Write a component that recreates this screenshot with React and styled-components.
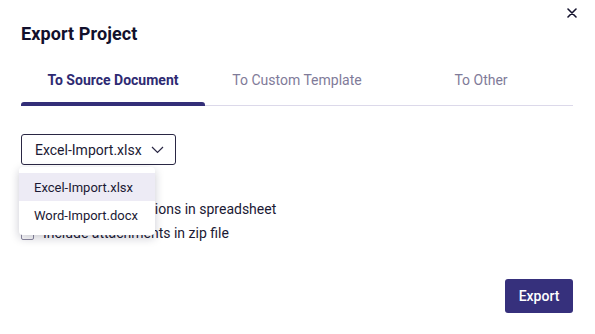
import React, { useState } from 'react';
import styled, { createGlobalStyle } from 'styled-components';

const GlobalStyle = createGlobalStyle`
  body {
    margin: 0;
    background: #ffffff;
    font-family: Roboto, 'Noto Sans', sans-serif;
  }
`;

const files = ['Excel-Import.xlsx', 'Word-Import.docx'];
const tabs = ['To Source Document', 'To Custom Template', 'To Other'];
const options = ['Include configurations in spreadsheet', 'Include attachments in zip file'];

export default function App() {
  const [active, setActive] = useState(0);
  const [file, setFile] = useState(files[0]);
  const [open, setOpen] = useState(true);

  return (
    <Dialog>
      <GlobalStyle />
      <CloseButton aria-label='close'>
        <svg width='10' height='10' viewBox='0 0 10 10'>
          <path d='M1 1 L9 9 M9 1 L1 9' stroke='#15132e' strokeWidth='1.6' strokeLinecap='round' />
        </svg>
      </CloseButton>
      <Title>Export Project</Title>
      <TabBar>
        {tabs.map((t, i) => (
          <Tab key={t} active={i === active} onClick={() => setActive(i)}>
            {t}
          </Tab>
        ))}
      </TabBar>
      <SelectWrap>
        <Select onClick={() => setOpen(!open)}>
          {file}
          <svg width='13' height='8' viewBox='0 0 13 8'>
            <path d='M1 1 L6.5 6.5 L12 1' fill='none' stroke='#2a2744' strokeWidth='1.2' />
          </svg>
        </Select>
        {open && (
          <Menu>
            {files.map((f) => (
              <MenuItem
                key={f}
                selected={f === file}
                onClick={() => {
                  setFile(f);
                  setOpen(false);
                }}
              >
                {f}
              </MenuItem>
            ))}
          </Menu>
        )}
      </SelectWrap>
      <Options>
        {options.map((o) => (
          <OptionRow key={o}>
            <Check />
            {o}
          </OptionRow>
        ))}
      </Options>
      <Footer>
        <ExportButton>Export</ExportButton>
      </Footer>
    </Dialog>
  );
}

const Dialog = styled.div`
  position: relative;
  width: 595px;
  height: 334px;
  box-sizing: border-box;
  padding: 24px 22px 0 21px;
  display: flex;
  flex-direction: column;
  color: #1b1934;
`;

const CloseButton = styled.button`
  position: absolute;
  top: 6px;
  right: 16px;
  width: 14px;
  height: 14px;
  padding: 0;
  border: none;
  background: none;
  display: flex;
  align-items: center;
  justify-content: center;
`;

const Title = styled.h1`
  margin: 0;
  font-size: 18px;
  line-height: 20px;
  font-weight: 700;
  color: #12102c;
  letter-spacing: 0.1px;
`;

const TabBar = styled.div`
  display: grid;
  grid-template-columns: repeat(3, 1fr);
  margin-top: 16px;
  border-bottom: 1px solid #dcd9ea;
`;

const Tab = styled.div`
  position: relative;
  height: 45px;
  box-sizing: border-box;
  padding-bottom: 5px;
  display: flex;
  align-items: center;
  justify-content: center;
  font-size: 14px;
  font-weight: ${(p) => (p.active ? 700 : 400)};
  color: ${(p) => (p.active ? '#2e2a72' : '#7f7b99')};
  cursor: pointer;

  &::after {
    content: '';
    display: ${(p) => (p.active ? 'block' : 'none')};
    position: absolute;
    left: 0;
    right: 0;
    bottom: -1px;
    height: 4px;
    border-radius: 3px 3px 0 0;
    background: #332e78;
  }
`;

const SelectWrap = styled.div`
  position: relative;
  margin-top: 28px;
  align-self: flex-start;
`;

const Select = styled.button`
  display: flex;
  align-items: center;
  gap: 9px;
  height: 31px;
  box-sizing: border-box;
  padding: 0 11px 0 13px;
  border: 1px solid #2a2744;
  border-radius: 3px;
  background: #fff;
  font-family: inherit;
  font-size: 14px;
  color: #1b1934;
`;

const Menu = styled.div`
  position: absolute;
  top: 33px;
  left: -2px;
  width: 136px;
  padding: 6px 0;
  background: #fff;
  border-radius: 4px;
  box-shadow: 0 3px 10px rgba(20, 18, 50, 0.22);
  z-index: 10;
`;

const MenuItem = styled.div`
  height: 28px;
  display: flex;
  align-items: center;
  padding-left: 15px;
  font-size: 13px;
  color: #1b1934;
  background: ${(p) => (p.selected ? '#edebf5' : 'transparent')};
`;

const Options = styled.div`
  display: flex;
  flex-direction: column;
  gap: 6px;
  margin-top: 35px;
`;

const OptionRow = styled.label`
  display: flex;
  align-items: center;
  gap: 9px;
  height: 18px;
  font-size: 14px;
  color: #1b1934;
`;

const Check = styled.span`
  width: 11px;
  height: 11px;
  border: 1px solid #8c89a0;
  border-radius: 2px;
`;

const Footer = styled.div`
  display: flex;
  justify-content: flex-end;
  margin-top: 37px;
`;

const ExportButton = styled.button`
  width: 68px;
  height: 34px;
  border: none;
  border-radius: 3px;
  background: #36307c;
  color: #fff;
  font-family: inherit;
  font-size: 14px;
  font-weight: 500;
`;
